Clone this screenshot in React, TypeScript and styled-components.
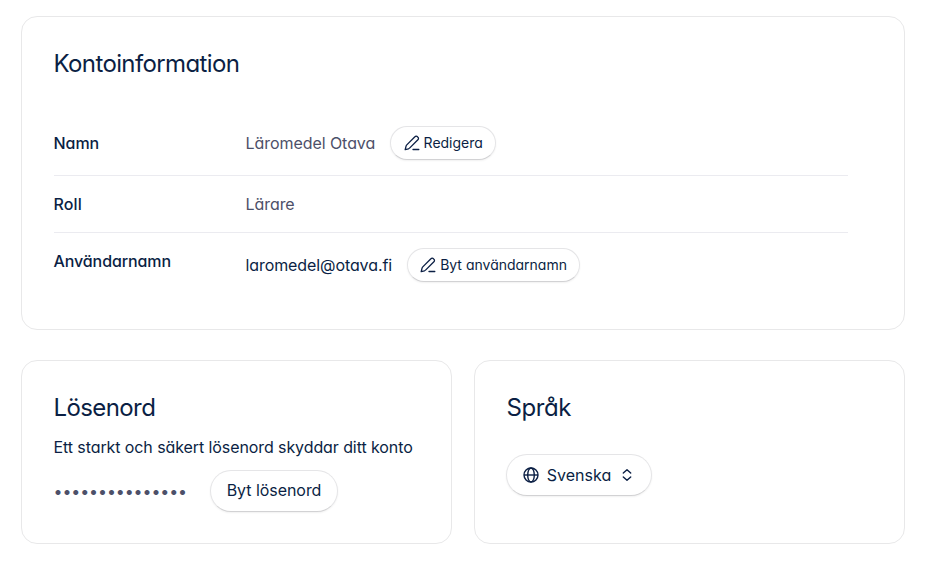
import React from "react";
import styled, { createGlobalStyle } from "styled-components";

const GlobalStyle = createGlobalStyle`
  * { box-sizing: border-box; }
  body {
    margin: 0;
    background: #fff;
    color: #0b1f44;
    font-family: Inter, "Noto Sans", sans-serif;
    font-feature-settings: "cv11";
  }
`;

const Page = styled.main`
  padding: 16px 20px 0 21px;
  display: grid;
  grid-template-columns: 431px 431px;
  column-gap: 22px;
  row-gap: 30px;
`;

const Card = styled.section<{ $wide?: boolean }>`
  grid-column: ${(p) => (p.$wide ? "1 / -1" : "auto")};
  height: ${(p) => (p.$wide ? 314 : 184)}px;
  padding: 31px 31.5px;
  border: 1px solid #e8e8e9;
  border-radius: 16px;
`;

const Title = styled.h2<{ $spacing?: string }>`
  margin: 0;
  font-size: 24px;
  line-height: 32px;
  font-weight: 370;
  white-space: nowrap;
  width: max-content;
  letter-spacing: ${(p) => p.$spacing || "0"};
`;

const List = styled.dl`
  width: 794px;
  margin: 30px 0 0;
`;

const Row = styled.div<{ $height: number; $top?: number }>`
  height: ${(p) => p.$height}px;
  display: grid;
  grid-template-columns: 192px 1fr;
  padding-top: ${(p) => p.$top ?? 16}px;
  & + & { border-top: 1px solid #ebebf0; }
`;

const Label = styled.dt<{ $spacing?: string; $offset?: number }>`
  font-size: 16px;
  line-height: 24px;
  font-weight: 500;
  justify-self: start;
  margin-top: ${(p) => p.$offset || 0}px;
  letter-spacing: ${(p) => p.$spacing || "0"};
`;

const Value = styled.dd<{ $muted?: boolean }>`
  margin: 0;
  display: flex;
  align-items: center;
  align-self: start;
  gap: 15px;
  font-size: 16px;
  line-height: 24px;
  color: ${(p) => (p.$muted ? "#4d5069" : "inherit")};
`;

const Text = styled.span<{ $spacing?: string }>`
  white-space: nowrap;
  font-size: 16px;
  line-height: 24px;
  letter-spacing: ${(p) => p.$spacing || "0"};
`;

const Button = styled.button<{ $small?: boolean; $width: number }>`
  width: ${(p) => p.$width}px;
  height: ${(p) => (p.$small ? 34 : 42)}px;
  padding: 0 0 1px;
  display: flex;
  align-items: center;
  justify-content: center;
  gap: ${(p) => (p.$small ? 4 : 8)}px;
  border: 1px solid #e5e5e7;
  border-bottom-color: #d2d2d4;
  border-radius: 999px;
  background: #fff;
  box-shadow: 0 1px 2px rgba(0, 0, 0, 0.06);
  color: #0b1f44;
  font-family: inherit;
  font-feature-settings: inherit;
  font-size: ${(p) => (p.$small ? 14 : 16)}px;
  white-space: nowrap;
`;

const PencilIcon = () => (
  <svg width="16" height="16" viewBox="0 0 16 16" fill="none" stroke="currentColor" strokeWidth="1.3" strokeLinecap="round" strokeLinejoin="round">
    <path d="M1.2 14.7 2 11.3q.2-.8.8-1.4L10.9 1.8a1.75 1.75 0 0 1 2.6 0l.4.4a1.75 1.75 0 0 1 0 2.6l-8.1 8.1q-.6.6-1.4.9L1.2 14.7Z" />
    <path d="M9 14.5h5.8" />
  </svg>
);

const Subtitle = styled.p`
  margin: 11px 0 0;
  font-size: 16px;
  line-height: 24px;
`;

const PasswordRow = styled.div`
  display: flex;
  align-items: center;
  justify-content: space-between;
  width: 284px;
  margin-top: 11px;
`;

const Dots = styled.span`
  color: #4d5069;
  font-size: 16px;
  letter-spacing: -0.1px;
`;

const ButtonLabel = styled.span`
  padding: 0 0 1px 1px;
  letter-spacing: -0.05px;
`;

const LanguageArea = styled.div`
  margin: 30px 0 0 -0.5px;
`;

const GlobeIcon = () => (
  <svg width="16" height="16" viewBox="0 0 16 16" fill="none" stroke="currentColor" strokeWidth="1.4">
    <circle cx="8" cy="8" r="7" /><ellipse cx="8" cy="8" rx="3.3" ry="7" /><path d="M1 8h14" />
  </svg>
);

const SelectorIcon = () => (
  <svg width="16" height="16" viewBox="0 0 16 16" fill="none" stroke="currentColor" strokeWidth="1.4" strokeLinecap="round" strokeLinejoin="round">
    <path d="M4.3 6.1 8 2.7l3.7 3.4M4.3 9.9 8 13.3l3.7-3.4" />
  </svg>
);

export default function App() {
  return (
    <>
      <GlobalStyle />
      <Page>
        <Card $wide>
          <Title $spacing="-0.62px">Kontoinformation</Title>
          <List>
            <Row $height={65}>
              <Label $offset={5} $spacing="-0.05px">Namn</Label>
              <Value $muted>
                <Text $spacing="-0.06px">Läromedel Otava</Text>
                <Button $small $width={106}><PencilIcon />Redigera</Button>
              </Value>
            </Row>
            <Row $height={57}>
              <Label $spacing="0.15px">Roll</Label>
              <Value $muted><Text $spacing="-0.06px">Lärare</Text></Value>
            </Row>
            <Row $height={66} $top={15}>
              <Label $offset={1} $spacing="-0.1px">Användarnamn</Label>
              <Value>
                <Text $spacing="-0.09px">laromedel@otava.fi</Text>
                <Button $small $width={173}><PencilIcon />Byt användarnamn</Button>
              </Value>
            </Row>
          </List>
        </Card>
        <Card>
          <Title $spacing="-0.6px">Lösenord</Title>
          <Subtitle><Text $spacing="-0.09px">Ett starkt och säkert lösenord skyddar ditt konto</Text></Subtitle>
          <PasswordRow>
            <Dots>•••••••••••••••</Dots>
            <Button $width={128}><ButtonLabel>Byt lösenord</ButtonLabel></Button>
          </PasswordRow>
        </Card>
        <Card>
          <Title $spacing="-0.4px">Språk</Title>
          <LanguageArea>
            <Button $width={146}><GlobeIcon />Svenska<SelectorIcon /></Button>
          </LanguageArea>
        </Card>
      </Page>
    </>
  );
}
